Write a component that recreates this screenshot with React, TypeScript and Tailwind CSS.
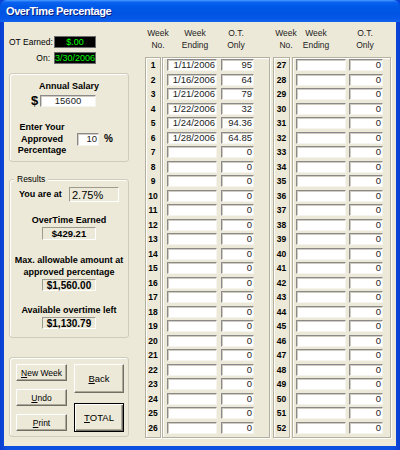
import React from "react";

const inputCls =
  "h-[12px] bg-white border border-t-[#8a8a8a] border-l-[#8a8a8a] border-b-[#f5f4ef] border-r-[#f5f4ef] shadow-[inset_1px_1px_0_#cfccbf] flex items-center text-[9.5px] leading-[10px] text-[#222] overflow-hidden whitespace-nowrap";
const etched =
  "border border-[#b3b09f] shadow-[inset_1px_1px_0_#fff,1px_1px_0_#fff]";
const group = "border border-[#cfccbc] rounded-[3px] shadow-[inset_1px_1px_0_#fff]";
const sunken =
  "border border-t-[#9d9b8f] border-l-[#9d9b8f] border-b-white border-r-white bg-[#ECE9D8] flex items-center";
const btn =
  "bg-[#ECE9D8] border border-t-white border-l-white border-b-[#716f64] border-r-[#716f64] shadow-[inset_-1px_-1px_0_#aca899] flex items-center justify-center text-[8.5px] leading-[10px] text-black whitespace-nowrap";

const data: Record<number, [string, string]> = {
  1: ["1/11/2006", "95"],
  2: ["1/16/2006", "64"],
  3: ["1/21/2006", "79"],
  4: ["1/22/2006", "32"],
  5: ["1/24/2006", "94.36"],
  6: ["1/28/2006", "64.85"],
};

function Table({ offset, left }: { offset: number; left: boolean }) {
  const rows = Array.from({ length: 26 }, (_, i) => i + 1 + offset);
  return (
    <div className={left ? "ml-[16px] flex flex-col" : "ml-[3px] flex flex-col"}>
      <div className="h-[35px] pt-[5px] flex text-[8.5px] leading-[12px] text-center text-[#222]">
        <div className="w-[26px]">
          Week
          <br />
          No.
        </div>
        <div className={left ? "w-[48px]" : "w-[34px]"}>
          Week
          <br />
          Ending
        </div>
        <div className={left ? "w-[34px]" : "ml-[15px] w-[34px]"}>
          O.T.
          <br />
          Only
        </div>
      </div>
      <div className="flex h-[381px]">
        <div className={`${left ? "w-[16px]" : "w-[17px]"} h-full pt-[1px] flex flex-col ${etched}`}>
          {rows.map((n) => (
            <div key={n} className="h-[14.5px] shrink-0">
              <div className="h-[12px] flex items-center justify-center text-[8.5px] font-bold leading-[10px]">
                {n}
              </div>
            </div>
          ))}
        </div>
        <div
          className={`${left ? "ml-[1px] w-[108px] pl-[4px]" : "ml-[2px] w-[99px] pl-[3px]"} h-full pt-[1px] flex flex-col ${etched}`}
        >
          {rows.map((n) => {
            const d = data[n];
            return (
              <div key={n} className="h-[14.5px] shrink-0 flex">
                <div className={`w-[50px] justify-end pr-[1px] ${inputCls}`}>{d ? d[0] : ""}</div>
                <div
                  className={`${left ? "ml-[4px] w-[33px]" : "ml-[3px] w-[34px]"} justify-end pr-[1px] ${inputCls}`}
                >
                  {d ? d[1] : "0"}
                </div>
              </div>
            );
          })}
        </div>
      </div>
    </div>
  );
}

function U({ c }: { c: string }) {
  return <span className="underline">{c}</span>;
}

export default function App() {
  return (
    <div className="w-[400px] h-[450px] flex flex-col font-['Liberation_Sans',Arial,sans-serif] text-black bg-[#0843d8]">
      <div className="h-[22px] shrink-0 rounded-t-[7px] bg-[linear-gradient(to_bottom,#4d9cff_0%,#0a62f0_10%,#0058e8_30%,#0054e3_60%,#0558e8_85%,#1664ee_100%)] flex items-center pl-[6px]">
        <span className="text-white font-bold text-[11px] tracking-[-0.4px] [text-shadow:1px_1px_0_#0a1f80]">
          OverTime Percentage
        </span>
      </div>
      <div className="flex-1 px-[4px] pb-[4px] bg-[linear-gradient(to_right,#0a3fd0,#0b4ee0_2%,#0b4ee0_98%,#0a3fd0)]">
        <div className="w-full h-full bg-[#ECE9D8] flex">
          {/* Left column */}
          <div className="ml-[5px] w-[120px] shrink-0 flex flex-col pt-[14px]">
            <div className="flex items-center h-[12px]">
              <div className="w-[45px] pr-[2px] text-right text-[8.5px] leading-[12px] whitespace-nowrap">
                OT Earned:
              </div>
              <div className="w-[42px] h-[12px] bg-black border border-[#6b6b6b] text-[#00ff00] text-[9px] leading-[10px] flex items-center justify-center">
                $.00
              </div>
            </div>
            <div className="mt-[4px] flex items-center h-[12px]">
              <div className="w-[45px] pr-[4px] text-right text-[8.5px] leading-[12px]">On:</div>
              <div className="w-[42px] h-[12px] bg-black border border-[#6b6b6b] text-[#00ff00] text-[9px] leading-[10px] flex items-center justify-center whitespace-nowrap">
                3/30/2006
              </div>
            </div>

            {/* Annual salary */}
            <div className={`mt-[9px] h-[89px] flex flex-col ${group}`}>
              <div className="pt-[6px] h-[18px] text-center text-[9px] font-bold leading-[12px]">
                Annual Salary
              </div>
              <div className="mt-[3px] flex items-center h-[12px] pl-[21px]">
                <div className="w-[7px] text-[13px] font-bold leading-[12px]">$</div>
                <div className={`ml-[2px] w-[56px] justify-center ${inputCls}`}>15600</div>
              </div>
              <div className="mt-[15px] flex items-center">
                <div className="w-[64px] text-center text-[9px] font-bold leading-[11.5px]">
                  Enter Your
                  <br />
                  Approved
                  <br />
                  Percentage
                </div>
                <div className={`ml-[3px] w-[22px] h-[13px] justify-end pr-[1px] ${inputCls}`}>10</div>
                <div className="ml-[5px] text-[10px] font-bold leading-[12px]">%</div>
              </div>
            </div>

            {/* Results */}
            <div className={`mt-[17px] h-[159px] flex flex-col ${group}`}>
              <div className="-mt-[6px] ml-[4px] px-[3px] self-start bg-[#ECE9D8] text-[8.5px] leading-[11px]">
                Results
              </div>
              <div className="mt-[2px] flex items-center h-[15px] pl-[9px]">
                <div className="w-[50px] text-[9px] font-bold leading-[11px] whitespace-nowrap">You are at</div>
                <div className={`w-[50px] h-[15px] pl-[2px] text-[11px] leading-[12px] ${sunken}`}>2.75%</div>
              </div>
              <div className="mt-[13px] text-center text-[9px] font-bold leading-[11px]">OverTime Earned</div>
              <div className={`mt-[1px] self-center w-[54px] h-[13px] justify-center text-[9.5px] font-bold leading-[11px] ${sunken}`}>
                $429.21
              </div>
              <div className="mt-[14px] text-center text-[9px] font-bold leading-[12px]">
                Max. allowable amount at
                <br />
                approved percentage
              </div>
              <div className={`mt-[1px] self-center w-[54px] h-[12px] justify-center text-[10px] font-bold leading-[11px] ${sunken}`}>
                $1,560.00
              </div>
              <div className="mt-[14px] text-center text-[9px] font-bold leading-[11px]">
                Available overtime left
              </div>
              <div className={`mt-[1px] self-center w-[54px] h-[12px] justify-center text-[10px] font-bold leading-[11px] ${sunken}`}>
                $1,130.79
              </div>
            </div>

            {/* Buttons */}
            <div className={`mt-[19px] h-[80px] flex pt-[6px] pl-[6px] gap-[7px] ${group}`}>
              <div className="w-[51px] flex flex-col gap-[8px]">
                <div className={`h-[17px] ${btn}`}>
                  <U c="N" />
                  ew Week
                </div>
                <div className={`h-[17px] ${btn}`}>
                  <U c="U" />
                  ndo
                </div>
                <div className={`h-[17px] ${btn}`}>
                  <U c="P" />
                  rint
                </div>
              </div>
              <div className="w-[50px] flex flex-col gap-[10px]">
                <div className={`h-[29px] ${btn} text-[9.5px]`}>
                  <U c="B" />
                  ack
                </div>
                <div className="h-[29px] bg-[#ECE9D8] border border-black shadow-[inset_1px_1px_0_#fff,inset_-1px_-1px_0_#716f64,inset_-2px_-2px_0_#aca899] flex items-center justify-center text-[9.5px] leading-[10px]">
                  <U c="T" />
                  OTAL
                </div>
              </div>
            </div>
          </div>

          <Table offset={0} left={true} />
          <Table offset={26} left={false} />
        </div>
      </div>
    </div>
  );
}
